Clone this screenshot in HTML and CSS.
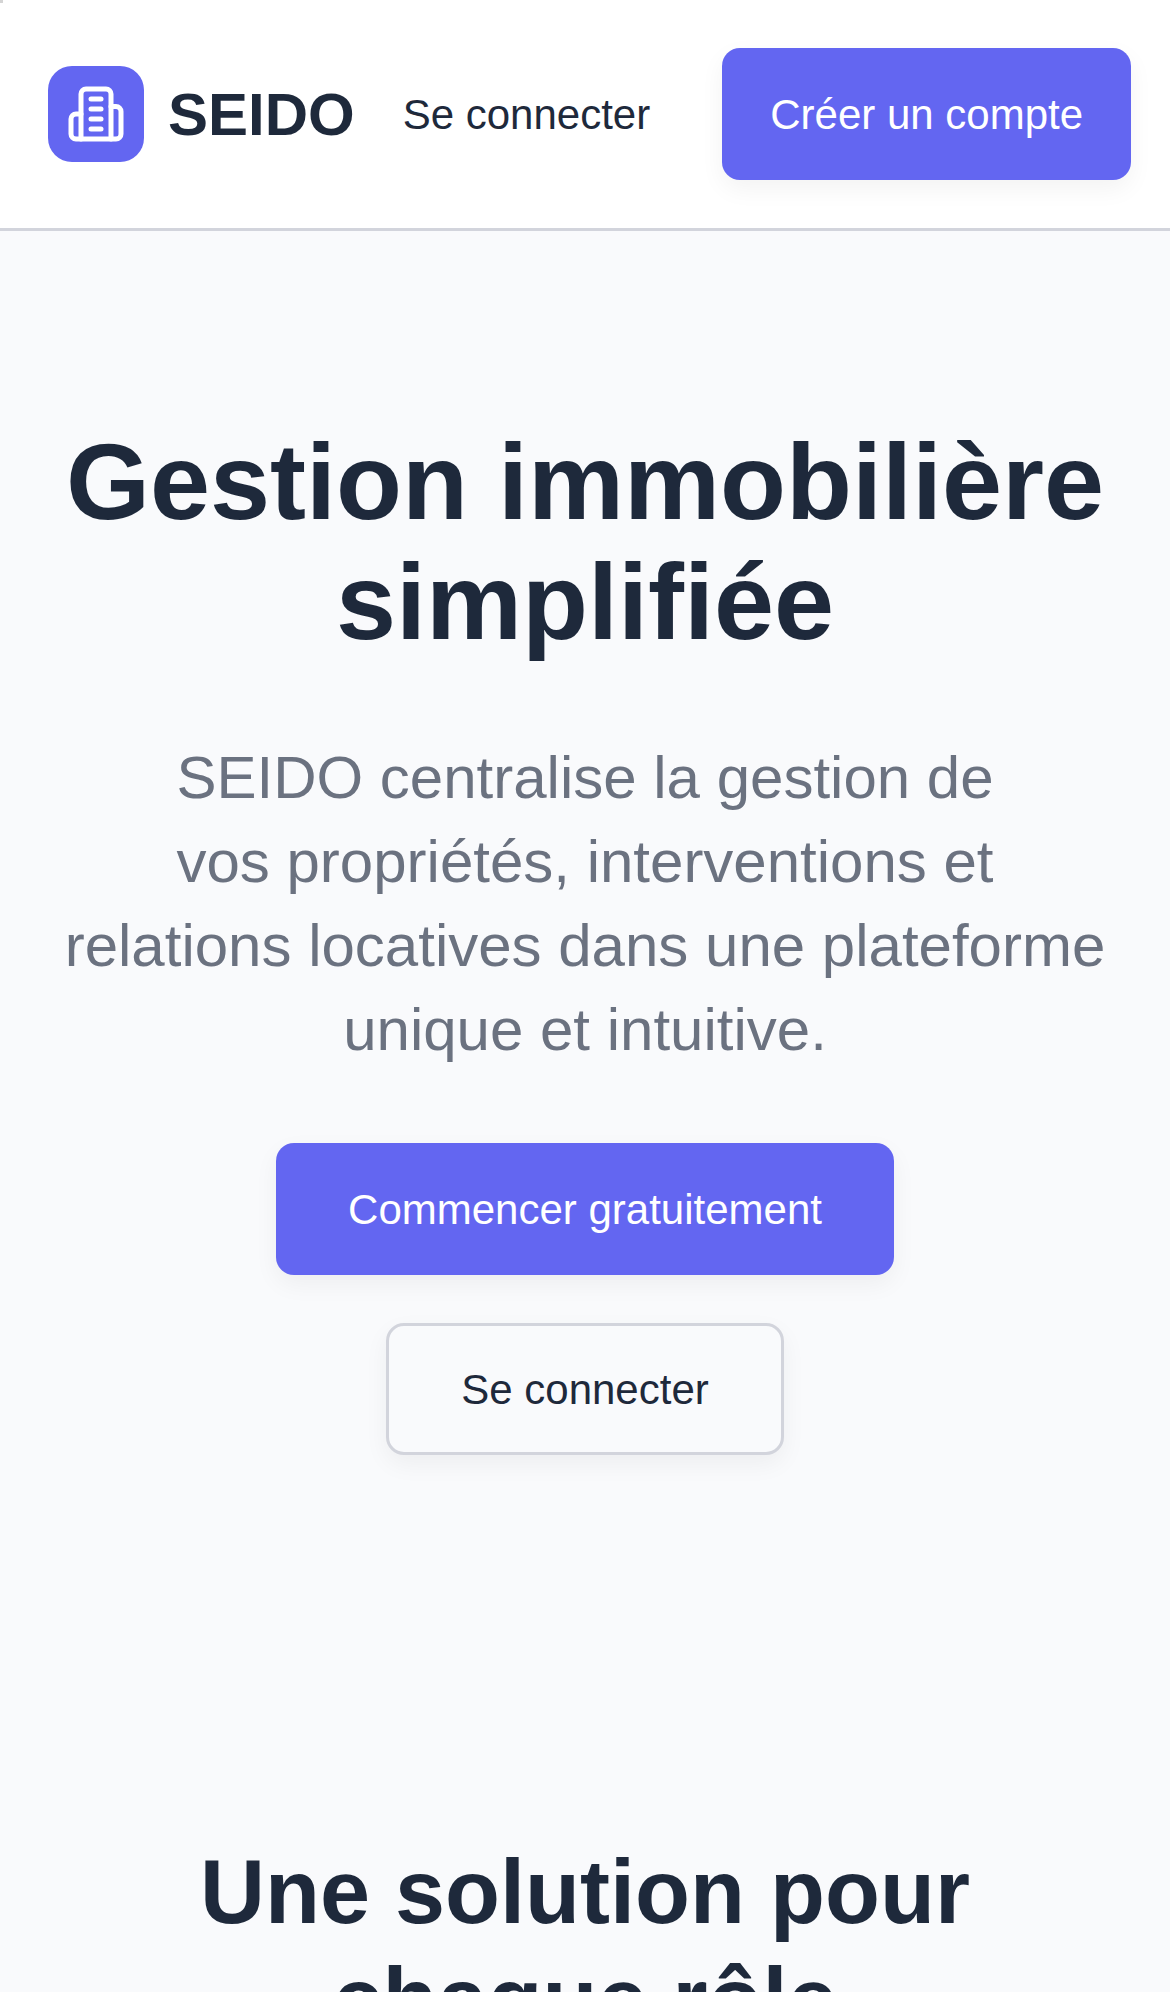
FILE: index.html
```html
<!DOCTYPE html>
<html lang="fr">
<head>
<meta charset="utf-8">
<title>SEIDO</title>
<link rel="stylesheet" href="styles.css">
</head>
<body>
<span class="corner-mark"></span>
<header class="header">
  <div class="brand">
    <span class="brand-icon">
      <svg viewBox="0 0 24 24" fill="none" stroke="currentColor" stroke-width="2" stroke-linecap="round" stroke-linejoin="round">
        <path d="M6 22V4a2 2 0 0 1 2-2h8a2 2 0 0 1 2 2v18Z"/>
        <path d="M6 12H4a2 2 0 0 0-2 2v6a2 2 0 0 0 2 2h2"/>
        <path d="M18 9h2a2 2 0 0 1 2 2v9a2 2 0 0 1-2 2h-2"/>
        <path d="M10 6h4"/>
        <path d="M10 10h4"/>
        <path d="M10 14h4"/>
        <path d="M10 18h4"/>
      </svg>
    </span>
    <span class="brand-name">SEIDO</span>
  </div>
  <nav class="nav">
    <a class="btn btn-ghost">Se connecter</a>
    <a class="btn btn-primary">Créer un compte</a>
  </nav>
</header>
<main>
  <section class="section">
    <h1 class="hero-title">Gestion immobilière simplifiée</h1>
    <p class="hero-text">SEIDO centralise la gestion de<br>vos propriétés, interventions et<br>relations locatives dans une plateforme<br>unique et intuitive.</p>
    <div class="actions">
      <a class="btn btn-primary btn-wide">Commencer gratuitement</a>
      <a class="btn btn-outline btn-wide">Se connecter</a>
    </div>
  </section>
  <section class="section">
    <h2 class="section-title">Une solution pour<br>chaque rôle</h2>
  </section>
</main>
</body>
</html>
```

FILE: styles.css
```css
* {
  box-sizing: border-box;
}

html,
body {
  height: 100%;
  margin: 0;
  overflow: hidden;
}

body {
  background: #f9fafc;
  color: #1e293b;
  font-family: "Liberation Sans", Arial, sans-serif;
}

.corner-mark {
  position: absolute;
  top: 0;
  left: 0;
  width: 3px;
  height: 3px;
  background: #d4d4d4;
}

.header {
  display: flex;
  align-items: center;
  justify-content: space-between;
  padding: 48px;
  background: #fff;
  border-bottom: 3px solid #d2d4dc;
}

.brand {
  display: flex;
  flex-shrink: 0;
  align-items: center;
  gap: 24px;
}

.brand-icon {
  display: flex;
  align-items: center;
  justify-content: center;
  width: 96px;
  height: 96px;
  border-radius: 24px;
  background: #6366f1;
  color: #fff;
}

.brand-icon svg {
  width: 60px;
  height: 60px;
}

.brand-name {
  padding-top: 2px;
  font-size: 60px;
  font-weight: 700;
  line-height: 84px;
}

.nav {
  display: flex;
  flex-shrink: 0;
  gap: 24px;
}

.btn {
  display: inline-flex;
  align-items: center;
  justify-content: center;
  height: 132px;
  padding: 2px 48px 0;
  border-radius: 18px;
  font-size: 42px;
  line-height: 60px;
  white-space: nowrap;
}

.btn-primary {
  background: #6366f1;
  color: #fff;
}

.btn-primary,
.btn-outline {
  box-shadow: 0 9px 24px rgba(0, 0, 0, 0.05);
}

.btn-outline {
  border: 3px solid #d2d4dc;
  background: #f9fafc;
}

.btn-wide {
  padding: 2px 72px 0;
}

.section {
  padding: 192px 48px;
  text-align: center;
}

.hero-title {
  margin: -1px 0 74px;
  font-size: 108px;
  line-height: 120px;
}

.hero-text {
  margin: 0 0 71px;
  color: #6b7280;
  font-size: 60px;
  line-height: 84px;
}

.actions {
  display: flex;
  flex-direction: column;
  align-items: center;
  gap: 48px;
}

.section-title {
  margin: -1px 0 0;
  font-size: 90px;
  line-height: 108px;
}
```
